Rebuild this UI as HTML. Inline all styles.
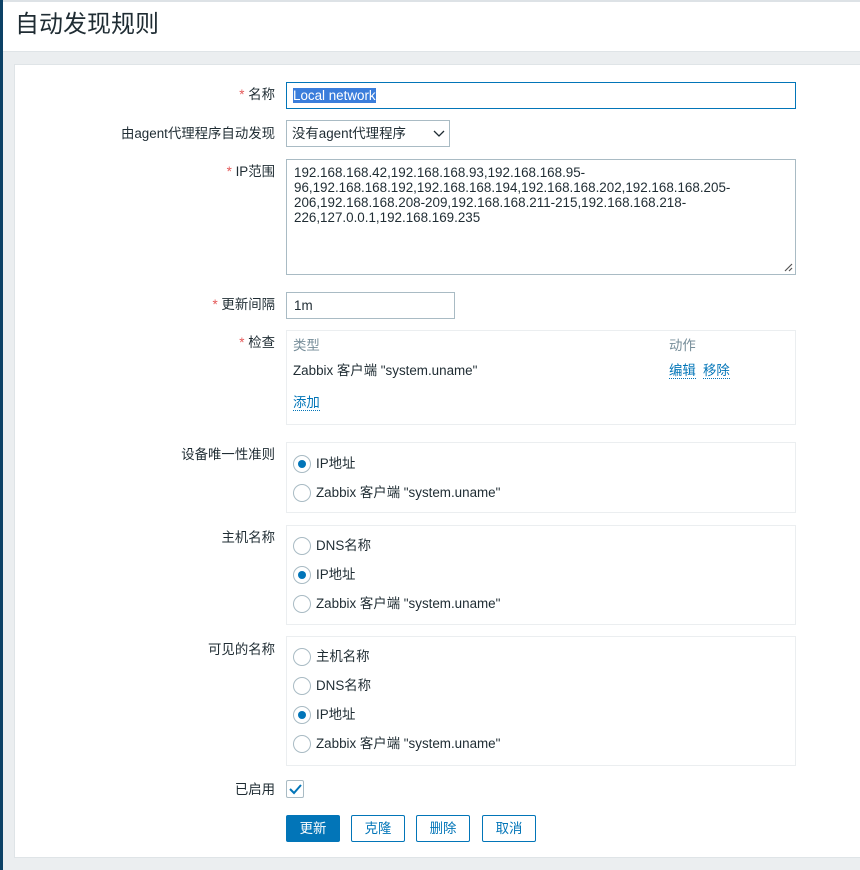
<!DOCTYPE html>
<html><head><meta charset="utf-8"><style>
*{box-sizing:border-box;margin:0;padding:0}
body{width:860px;height:870px;background:#ebeef0;font-family:"Liberation Sans","Noto Sans CJK SC",sans-serif;font-size:13.4px;line-height:14px;color:#1f2c33;position:relative;overflow:hidden}
.bar{position:absolute;left:0;top:0;width:3px;height:870px;background:#0c4166}
.hdr{position:absolute;left:3px;top:0;width:857px;height:52px;background:#fff;border-top:2px solid #dde2e6;border-bottom:1px solid #dfe4e7}
.hdr h1{font-weight:normal;font-size:24px;line-height:28px;position:absolute;left:12px;top:9px;color:#1f2c33}
.panel{position:absolute;left:14px;top:64px;width:846px;height:794px;background:#fff;border:1px solid #dfe4e7;border-right:none}
.abs{position:absolute}
.lbl{position:absolute;right:585px;text-align:right;white-space:nowrap}
.st{color:#e45959}
.inp{position:absolute;border:1px solid #a9bbc4;background:#fff}
.box{position:absolute;left:286px;width:510px;border:1px solid #ebeef0}
.radio{position:absolute;left:6px;width:18px;height:18px;border-radius:50%;border:1px solid #a9bbc4;background:#fff}
.radio.on::after{content:"";position:absolute;left:4px;top:4px;width:8px;height:8px;border-radius:50%;background:#0275b8}
.rt{position:absolute;left:29px}
.lnk{color:#0275b8;border-bottom:1px dotted #0275b8}
.btn{position:absolute;top:815px;height:27px;width:54px;border:1px solid #0275b8;border-radius:2px;color:#0275b8;background:#fff;text-align:center;line-height:25px}
</style></head><body>
<div class="bar"></div>
<div class="hdr"><h1>自动发现规则</h1></div>
<div class="panel"></div>

<div class="lbl" style="top:88px"><span class="st">*</span> 名称</div>
<div class="inp" style="left:286px;top:82px;width:510px;height:27px;border-color:#0275b8"><span style="position:absolute;left:6px;top:5px;background:#3a7ddb;color:#fff;line-height:15px">Local network</span></div>

<div class="lbl" style="top:127px">由agent代理程序自动发现</div>
<div class="inp" style="left:286px;top:120px;width:164px;height:27px"><span class="abs" style="left:5px;top:6px">没有agent代理程序</span><svg class="abs" style="left:146px;top:9px" width="12" height="8"><path d="M1 1l5 5 5-5" fill="none" stroke="#1f2c33" stroke-width="1.3"/></svg></div>

<div class="lbl" style="top:165px"><span class="st">*</span> IP范围</div>
<div class="inp" style="left:286px;top:159px;width:510px;height:116px"><div class="abs" style="left:7px;top:5px;line-height:15px;width:450px">192.168.168.42,192.168.168.93,192.168.168.95-96,192.168.168.192,192.168.168.194,192.168.168.202,192.168.168.205-206,192.168.168.208-209,192.168.168.211-215,192.168.168.218-226,127.0.0.1,192.168.169.235</div>
<svg class="abs" style="right:2px;bottom:2px" width="10" height="10"><path d="M2 9L9 2M6 9L9 6" stroke="#555" stroke-width="1.2"/></svg></div>

<div class="lbl" style="top:298px"><span class="st">*</span> 更新间隔</div>
<div class="inp" style="left:286px;top:292px;width:169px;height:27px"><span class="abs" style="left:7px;top:6px">1m</span></div>

<div class="lbl" style="top:336px"><span class="st">*</span> 检查</div>
<div class="box" style="top:330px;height:95px">
<span class="abs" style="left:6px;top:8px;color:#768d99">类型</span>
<span class="abs" style="left:382px;top:8px;color:#768d99">动作</span>
<span class="abs" style="left:6px;top:33px">Zabbix 客户端 "system.uname"</span>
<span class="abs lnk" style="left:382px;top:33px">编辑</span>
<span class="abs lnk" style="left:416px;top:33px">移除</span>
<span class="abs lnk" style="left:6px;top:65px">添加</span>
</div>

<div class="lbl" style="top:448px">设备唯一性准则</div>
<div class="box" style="top:442px;height:71px">
<div class="radio on" style="top:12px"></div><span class="rt" style="top:14px">IP地址</span>
<div class="radio" style="top:41px"></div><span class="rt" style="top:43px">Zabbix 客户端 "system.uname"</span>
</div>

<div class="lbl" style="top:531px">主机名称</div>
<div class="box" style="top:525px;height:100px">
<div class="radio" style="top:11px"></div><span class="rt" style="top:13px">DNS名称</span>
<div class="radio on" style="top:40px"></div><span class="rt" style="top:42px">IP地址</span>
<div class="radio" style="top:69px"></div><span class="rt" style="top:71px">Zabbix 客户端 "system.uname"</span>
</div>

<div class="lbl" style="top:643px">可见的名称</div>
<div class="box" style="top:636px;height:130px">
<div class="radio" style="top:11px"></div><span class="rt" style="top:13px">主机名称</span>
<div class="radio" style="top:40px"></div><span class="rt" style="top:42px">DNS名称</span>
<div class="radio on" style="top:69px"></div><span class="rt" style="top:71px">IP地址</span>
<div class="radio" style="top:98px"></div><span class="rt" style="top:100px">Zabbix 客户端 "system.uname"</span>
</div>

<div class="lbl" style="top:783px">已启用</div>
<div class="inp" style="left:286px;top:780px;width:18px;height:18px;border-radius:2px"><svg class="abs" style="left:2px;top:3px" width="13" height="11"><path d="M1 5l4 4 7-8" fill="none" stroke="#0275b8" stroke-width="2"/></svg></div>

<div class="btn" style="left:286px;background:#0275b8;color:#fff">更新</div>
<div class="btn" style="left:351px">克隆</div>
<div class="btn" style="left:416px">删除</div>
<div class="btn" style="left:482px">取消</div>
</body></html>
